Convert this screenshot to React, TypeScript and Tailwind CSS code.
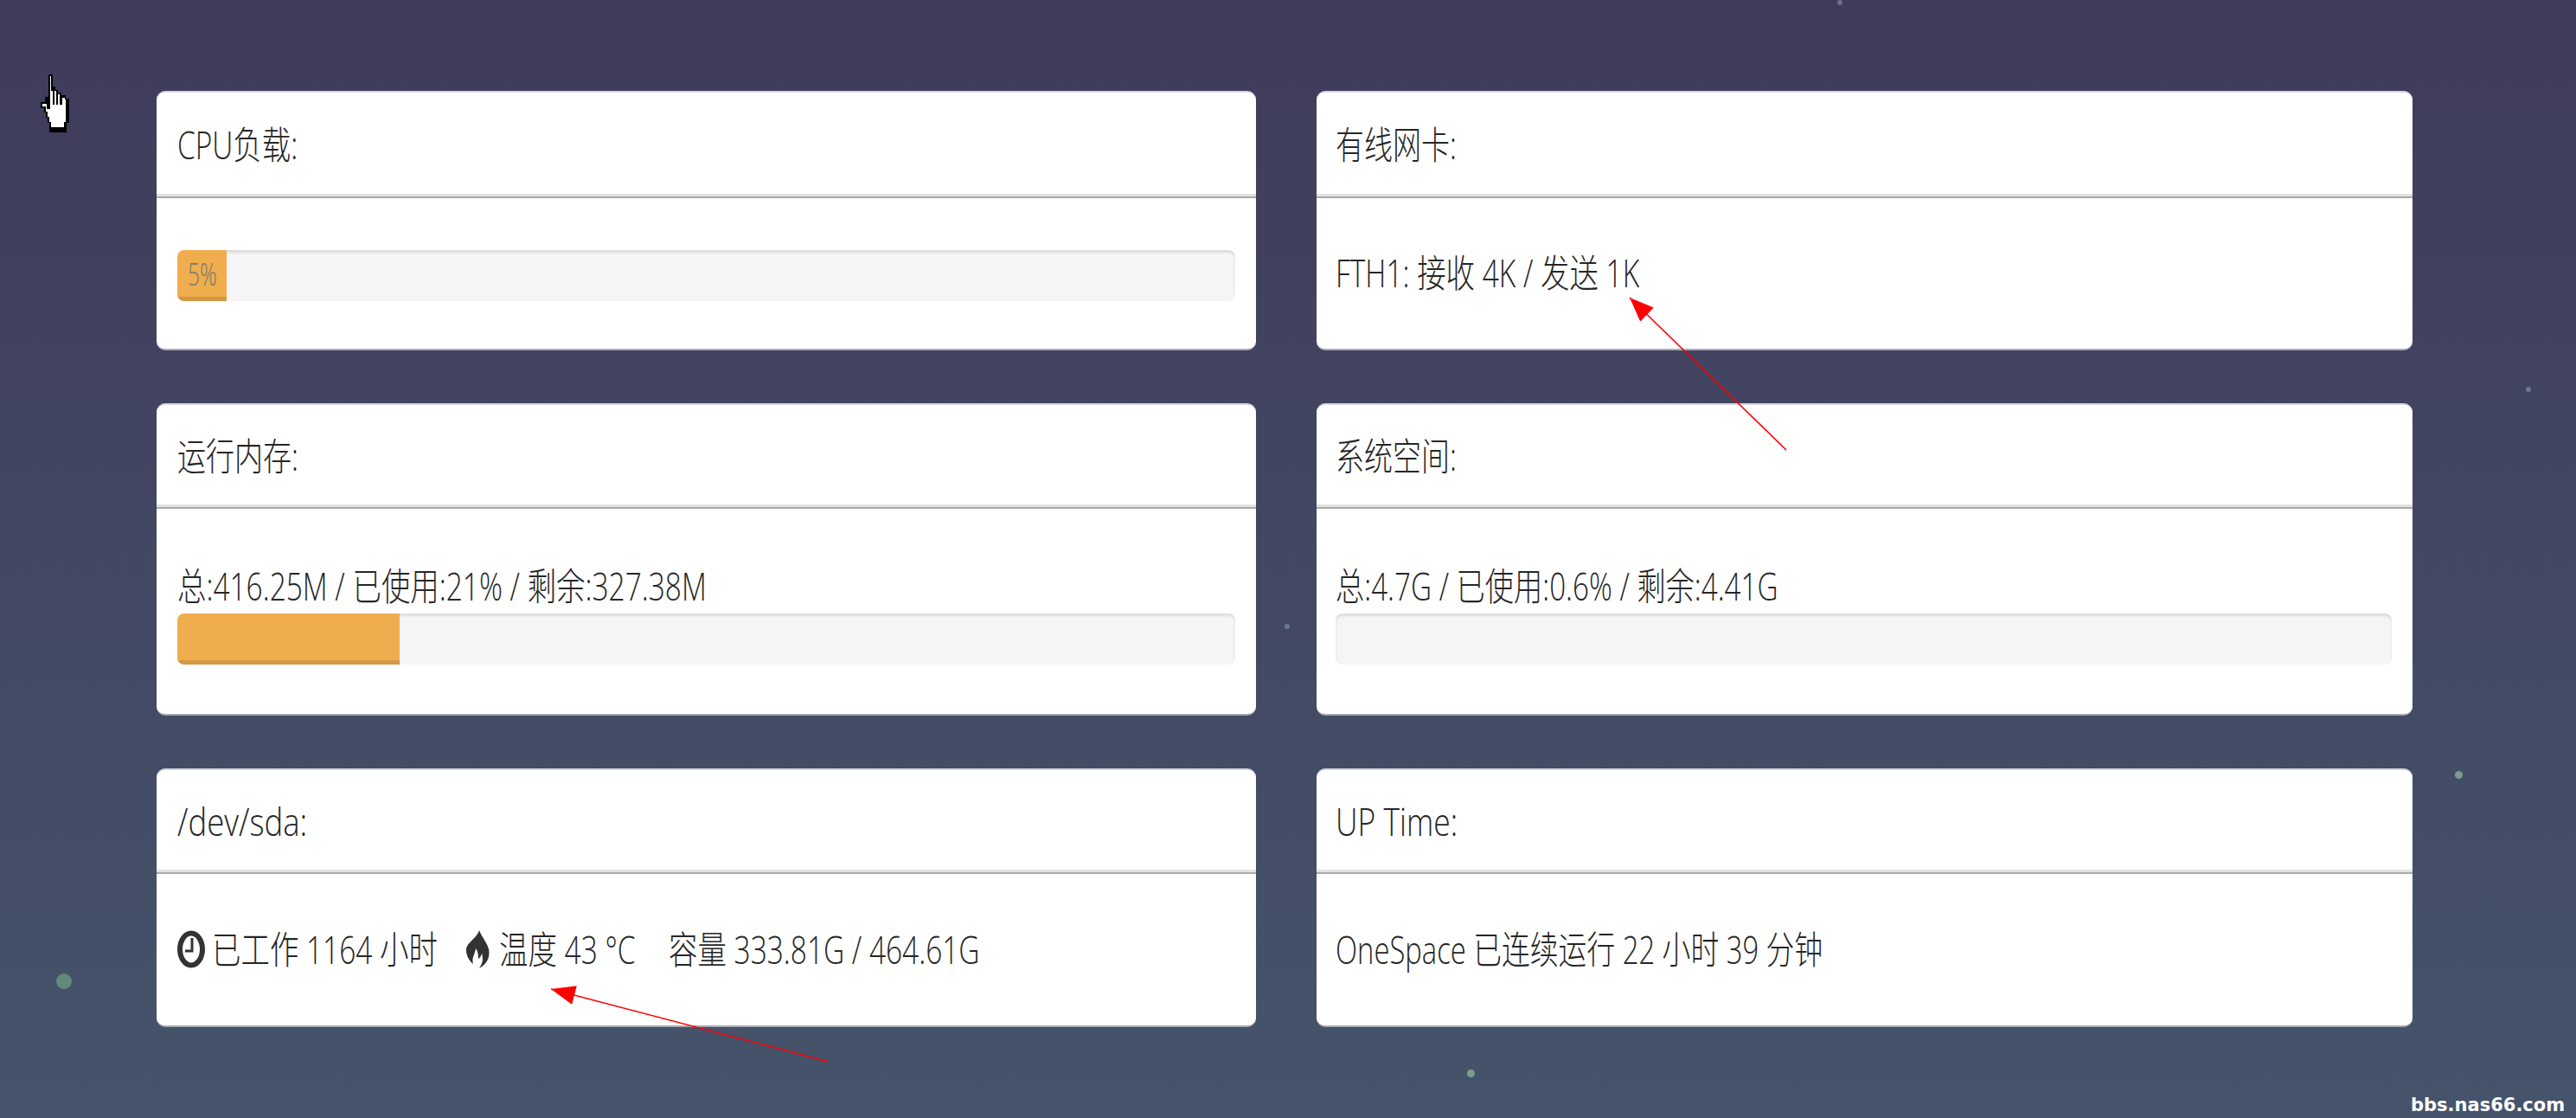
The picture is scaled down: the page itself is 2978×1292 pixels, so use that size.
import React from "react";

const textFont = "font-['Open_Sans','Noto_Sans_CJK_SC',sans-serif] font-light text-[44px] leading-[44px] text-[#262626]";

const Squeezed = ({ children, className = "" }: { children: React.ReactNode; className?: string }) => (
  <span className={`inline-block origin-left whitespace-pre ${textFont} ${className}`}>{children}</span>
);

const Card = ({ title, titleScale, inset, headClass, bodyClass, children }: { title: string; titleScale: string; inset: string; headClass: string; bodyClass: string; children: React.ReactNode }) => (
  <div className="flex flex-col bg-white rounded-[10px] border-t-2 border-b-2 border-t-[#d6d6e0] border-b-[#a8a8b4] overflow-hidden">
    <div className={`shrink-0 flex items-center pt-[2px] border-b-[5px] border-b-[#e2e2e2] ${headClass} ${inset}`}>
      <Squeezed className={titleScale}>{title}</Squeezed>
    </div>
    <div className="h-[2px] shrink-0 bg-[#aaaaaa] -mt-[2px]" />
    <div className={`flex-1 flex flex-col pr-[24px] ${inset} ${bodyClass}`}>{children}</div>
  </div>
);

const Bar = ({ pct, label, className = "" }: { pct: number; label?: string; className?: string }) => (
  <div className={`h-[59px] w-full rounded-[8px] bg-[#f5f5f5] shadow-[inset_0_3px_3px_rgba(0,0,0,0.1)] overflow-hidden shrink-0 ${className}`}>
    <div
      className="h-full flex items-center justify-center bg-[#f0ad4e] shadow-[inset_0_-5px_0_rgba(0,0,0,0.12)]"
      style={{ width: `${pct}%` }}
    >
      {label && (
        <span className="inline-block origin-center scale-x-[0.68] font-['Open_Sans',sans-serif] font-light text-[36px] leading-none text-[#77776e] pb-[4px]">
          {label}
        </span>
      )}
    </div>
  </div>
);

const ClockIcon = () => (
  <svg viewBox="0 0 32 44" preserveAspectRatio="none" className="w-[32px] h-[44px] shrink-0">
    <ellipse cx="16" cy="22" rx="13" ry="18.5" fill="none" stroke="#333" strokeWidth="6" />
    <path d="M17 9v15h-8" fill="none" stroke="#333" strokeWidth="3" />
  </svg>
);

const FlameIcon = () => (
  <svg viewBox="0 0 27 44" preserveAspectRatio="none" className="w-[27px] h-[44px] shrink-0">
    <path
      d="M15 0c3 8 9 14 11 22 2 10-3 18-11 22 4-6 5-11 3-17-1 3-2 5-4 6 0-6-1-9-3-12-1 7-5 11-3 18-5-4-8-10-8-16 0-9 12-13 15-23z"
      fill="#333"
    />
  </svg>
);

const HandCursor = () => (
  <svg viewBox="0 0 37 67" preserveAspectRatio="none" className="absolute left-[46px] top-[86px] w-[37px] h-[67px]" shapeRendering="crispEdges">
    <path
      d="M10 0h5v14h3v4h3v3h4v3h5v4h4v28h-3v11H11V56H9v-6H7v-6H5v-5H1v-7h5v-6h4z"
      fill="#000"
    />
    <path
      d="M12 2h1v17h2v16h2V19h2v16h2V23h2v12h3V27h3v2h1v26h-2v6H13v-6h-2v-6H9v-6H7v-6H3v-3h5v6h4z"
      fill="#fff"
    />
  </svg>
);

const Arrow = ({ x1, y1, x2, y2 }: { x1: number; y1: number; x2: number; y2: number }) => {
  const a = Math.atan2(y1 - y2, x1 - x2);
  const len = 30;
  const w = 0.38;
  const p1 = `${x2 + len * Math.cos(a - w)},${y2 + len * Math.sin(a - w)}`;
  const p2 = `${x2 + len * Math.cos(a + w)},${y2 + len * Math.sin(a + w)}`;
  return (
    <g>
      <line x1={x1} y1={y1} x2={x2} y2={y2} stroke="#ff0000" strokeWidth="1.6" />
      <polygon points={`${x2},${y2} ${p1} ${p2}`} fill="#ff0000" />
    </g>
  );
};

const stars = [
  { left: 65, top: 1125, size: 18, color: "#628a7c" },
  { left: 1696, top: 1236, size: 9, color: "#7c9c8e" },
  { left: 2838, top: 891, size: 9, color: "#7c9c8e" },
  { left: 2920, top: 447, size: 6, color: "#6a7a90" },
  { left: 1485, top: 721, size: 6, color: "#6a7a90" },
  { left: 2124, top: 0, size: 6, color: "#6a7090" },
];

export default function App() {
  return (
    <div className="relative w-[2978px] h-[1292px] overflow-hidden bg-gradient-to-b from-[#3f3b5b] to-[#45546b]">
      {stars.map((s) => (
        <div
          key={s.left}
          className="absolute rounded-full"
          style={{ left: s.left, top: s.top, width: s.size, height: s.size, background: s.color }}
        />
      ))}

      <div className="relative grid grid-cols-[1271px_1267px] grid-rows-[300px_361px_299px] gap-x-[70px] gap-y-[61px] pl-[181px] pt-[105px]">
        <Card title="CPU负载:" titleScale="scale-x-[0.76]" inset="pl-[24px]" headClass="h-[122px]" bodyClass="pt-[60px]">
          <Bar pct={4.7} label="5%" />
        </Card>
        <Card title="有线网卡:" titleScale="scale-x-[0.75]" inset="pl-[22px]" headClass="h-[122px]" bodyClass="pt-[64px]">
          <Squeezed className="scale-x-[0.76]">FTH1: 接收 4K / 发送 1K</Squeezed>
        </Card>

        <Card title="运行内存:" titleScale="scale-x-[0.75]" inset="pl-[24px]" headClass="h-[120px]" bodyClass="pt-[67px]">
          <Squeezed className="scale-x-[0.76]">总:416.25M / 已使用:21% / 剩余:327.38M</Squeezed>
          <Bar pct={21} className="mt-[10px]" />
        </Card>
        <Card title="系统空间:" titleScale="scale-x-[0.75]" inset="pl-[22px]" headClass="h-[120px]" bodyClass="pt-[67px]">
          <Squeezed className="scale-x-[0.755]">总:4.7G / 已使用:0.6% / 剩余:4.41G</Squeezed>
          <Bar pct={0} className="mt-[10px]" />
        </Card>

        <Card title="/dev/sda:" titleScale="scale-x-[0.83]" inset="pl-[24px]" headClass="h-[120px]" bodyClass="pt-[65px]">
          <div className="flex items-center h-[44px]">
            <ClockIcon />
            <div className="w-[302px] pl-[8px] shrink-0">
              <Squeezed className="scale-x-[0.76]">已工作 1164 小时</Squeezed>
            </div>
            <FlameIcon />
            <div className="w-[207px] pl-[11px] shrink-0">
              <Squeezed className="scale-x-[0.76]">温度 43 °C</Squeezed>
            </div>
            <Squeezed className="scale-x-[0.76]">容量 333.81G / 464.61G</Squeezed>
          </div>
        </Card>
        <Card title="UP Time:" titleScale="scale-x-[0.805]" inset="pl-[22px]" headClass="h-[120px]" bodyClass="pt-[65px]">
          <Squeezed className="scale-x-[0.745]">OneSpace 已连续运行 22 小时 39 分钟</Squeezed>
        </Card>
      </div>

      <svg className="absolute inset-0 w-[2978px] h-[1292px] pointer-events-none" viewBox="0 0 2978 1292">
        <Arrow x1={2065} y1={520} x2={1884} y2={344} />
        <Arrow x1={958} y1={1227} x2={637} y2={1143} />
      </svg>

      <HandCursor />

      <span className="absolute left-[2787px] top-[1264px] font-['DejaVu_Sans',sans-serif] font-bold text-[21px] leading-[26px] text-white">
        bbs.nas66.com
      </span>
    </div>
  );
}
